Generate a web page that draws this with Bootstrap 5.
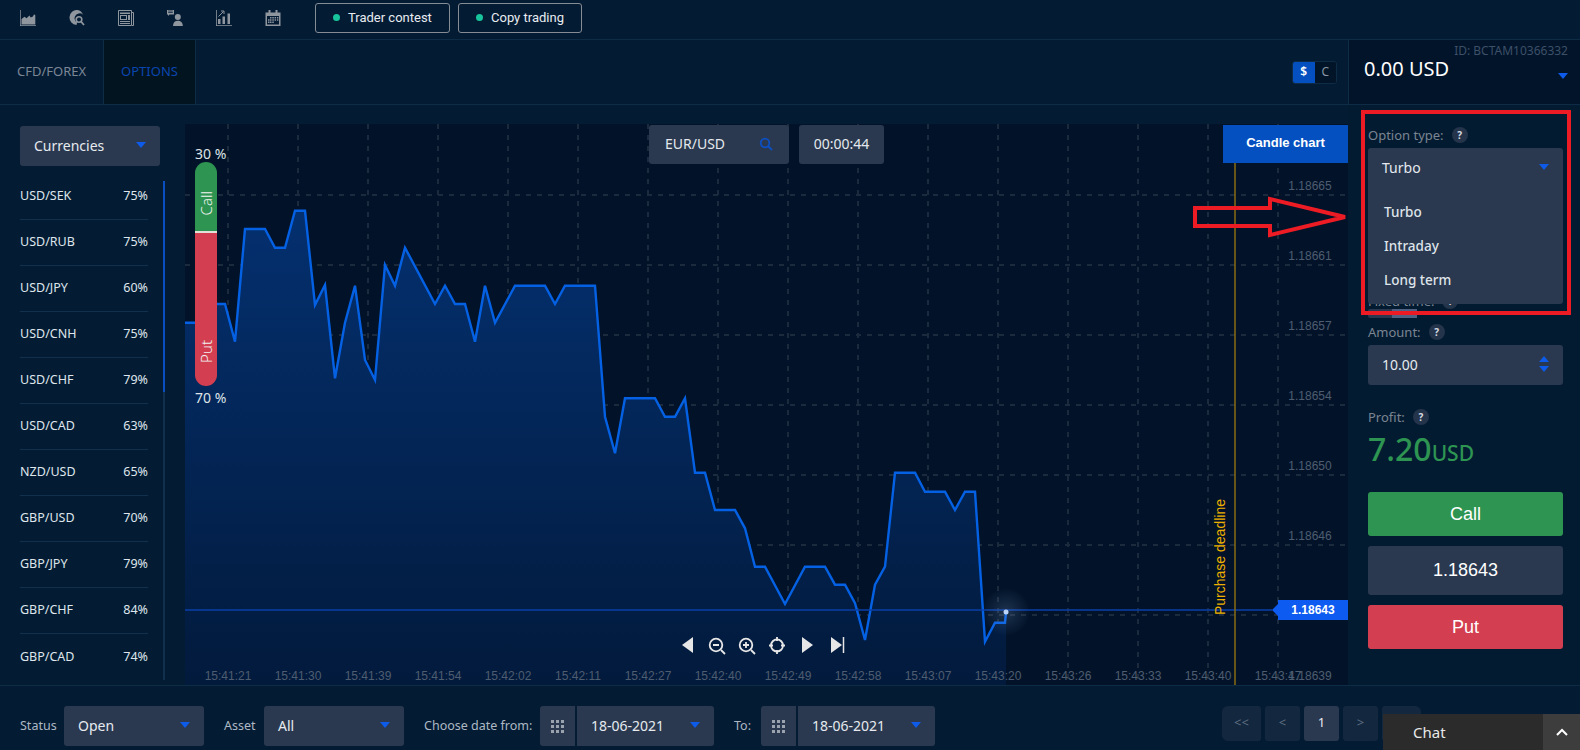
<!doctype html>
<html lang="en">
<head>
  <meta charset="utf-8">
  <meta name="viewport" content="width=device-width, initial-scale=1">
  <title>Options trading</title>
  <link href="https://cdn.jsdelivr.net/npm/bootstrap@5.3.3/dist/css/bootstrap.min.css" rel="stylesheet">
  <style>
    html, body { height: 100%; }
    body {
      width: 1580px; height: 750px; overflow: hidden; position: relative;
      background: #031c33; color: #e4e8ee;
      font-family: "Noto Sans", sans-serif; font-size: 13px;
    }
    /* top bars */
    .tool-bar { height: 40px; padding: 0 0 4px 20px; border-bottom: 1px solid #0f2c47; background: #041b34; }
    .tool-icon { width: 16px; height: 16px; margin-right: 33px; flex: none; }
    .tool-icon:nth-child(6) { margin-right: 34px; }
    .promo-btn {
      height: 30px; padding: 0 17px; font: 13px Roboto, sans-serif; color: #e8ecf0; background: transparent;
      border: 1px solid #868c94; border-radius: 3px; white-space: nowrap;
    }
    .promo-btn:first-child { width: 135px; }
    .promo-btn:last-child { width: 124px; }
    .dot { width: 7px; height: 7px; border-radius: 50%; background: #17c49b; }
    .market-bar { height: 65px; border-bottom: 1px solid #0f2c47; background: #041b34; }
    .market-tab { height: 64px; font-size: 13px; color: #7b8794; border-right: 1px solid #0f2c47; width: 104px; }
    .market-tab.active-tab { width: 92px; background: #02141f; color: #0b46b0; }
    .cur-toggle { height: 23px; width: 45px; border: 1px solid #0f2c47; border-radius: 3px; overflow: hidden; margin-right: 11px; font-size: 12px; }
    .cur-toggle span { flex: 1; }
    .cur-on { background: #0450c0; color: #fff; font-weight: 600; }
    .cur-off { background: #021427; color: #8a95a3; }
    .balance { width: 232px; height: 64px; background: #01142a; border-left: 1px solid #0f2c47; position: relative; padding: 13px 12px 0 15px; }
    .acc-id { font-size: 12px; color: #3d5068; text-align: right; line-height: 12px; margin-top: -8px; margin-bottom: -1px; }
    .acc-sum { font-size: 20px; line-height: 26px; color: #fff; }
    .acc-caret { position: absolute; right: 12px; top: 33px; }
    /* main */
    .main-row { height: 580px; }
    .side-col { width: 185px; padding: 21px 0 0 20px; flex: none; position: relative; }
    .dark-select {
      background: #2a394f; border-radius: 3px; height: 40px; padding: 0 14px 2px; color: #e6eaf0; font-size: 14px;
    }
    .sel-w { width: 140px; }
    .tri-down { width: 0; height: 0; border: 5px solid transparent; border-top: 6px solid #0d5be8; border-bottom: 0; flex: none; }
    .tri-up { width: 0; height: 0; border: 5px solid transparent; border-bottom: 6px solid #0d5be8; border-top: 0; }
    .pair-list { width: 128px; margin-top: 8px; --bs-list-group-bg: transparent; --bs-list-group-color: #dfe5ec; --bs-list-group-border-color: #12304c; }
    .pair-list .list-group-item { height: 46px; padding: 0; font-size: 12.5px; }
    .scroll-track { position: absolute; left: 163px; top: 76px; width: 2px; height: 499px; background: #12304c; }
    .scroll-thumb { height: 211px; background: #0a4fc0; }
    .chart-col { width: 1163px; flex: none; margin-top: 19px; height: 561px; position: relative; }
    .chart-col svg { display: block; }
    .axis-text { font: 12px "Liberation Sans", sans-serif; fill: #4f5d70; }
    .deadline-text { font-size: 14px; fill: #eeb000; }
    .candle-btn {
      position: absolute; right: 0; top: 1px; width: 125px; height: 38px; padding: 0 0 4px; background: #0450c0; color: #fff;
      font: bold 13px "Liberation Sans", sans-serif; border: 0; border-radius: 0;
    }
    .pair-box { position: absolute; top: 1px; left: 464px; display: flex; gap: 10px; }
    .pair-box > div { height: 39px; background: #2a394f; border-radius: 3px; font-size: 14px; padding-bottom: 2px; }
    .pair-name { width: 140px; padding: 0 16px; }
    .pair-timer { width: 85px; }
    .gauge { position: absolute; left: 10px; top: 38px; width: 22px; height: 224px; border-radius: 11px; overflow: hidden; }
    .gauge-call { height: 71px; background: #2d9551; border-bottom: 2px solid #e4e0d8; padding-top: 29px; }
    .gauge-put { height: 153px; background: #d33f50; padding-bottom: 23px; }
    .v-text { writing-mode: vertical-rl; transform: rotate(180deg); font-size: 15px; font-weight: 300; line-height: 22px; color: #f2f2f2; }
    .gauge-pct { position: absolute; left: 10px; font-size: 14px; line-height: 16px; color: #dfe3e8; }
    .pct-top { top: 22px; }
    .pct-bottom { top: 266px; }
    .price-tag {
      position: absolute; left: 1093px; top: 476px; width: 70px; height: 20px; background: #0d5bf0; color: #fff;
      font: bold 12px "Liberation Sans", sans-serif;
    }
    .price-tag::before {
      content: ""; position: absolute; left: -6px; top: 4px; border: 6px solid transparent; border-left: 0; border-right-color: #0d5bf0;
    }
    .panel-col { width: 232px; padding: 20px 17px 0 20px; flex: none; background: #031b31; }
    .field-label { height: 20px; color: #7b8591; font-size: 13px; line-height: 20px; }
    .hint { width: 16px; height: 16px; border-radius: 50%; background: #24344a; color: #d6dbe2; font-size: 10px; font-weight: 700; margin-left: 8px; }
    .type-wrap { position: relative; margin: 3px 0 103px; }
    .type-head { border-radius: 3px 3px 0 0; }
    .type-menu { position: absolute; left: 0; right: 0; top: 40px; height: 116px; background: #2a394f; border-radius: 0 0 3px 3px; padding: 7px 16px 0; z-index: 2; font-weight: 500; font-size: 13.5px; color: #dfe4ea; }
    .type-menu div { height: 34px; line-height: 34px; }
    .toggle-track { width: 49px; height: 9px; background: #2a394f; border-radius: 2px; margin-top: -2px; margin-bottom: 1px; }
    .toggle-track div { width: 25px; height: 9px; margin-left: 24px; background: #4f6284; }
    .amount-label { margin-top: 4px; }
    .amount-box { margin: 3px 0 22px; }
    .spin { gap: 4px; }
    .profit-num { color: #2d9551; font-size: 32px; font-weight: 500; line-height: 40px; height: 40px; margin: 2px 0 23px; }
    .profit-num small { font-size: 21px; }
    .act-btn { height: 44px; width: 195px; border: 0; border-radius: 3px; color: #fff; font: 18px "Liberation Sans", sans-serif; }
    .act-call { background: #2d9551; }
    .act-put { background: #d33f50; }
    .act-price { height: 49px; width: 195px; background: #2a394f; border-radius: 3px; font: 18px "Liberation Sans", sans-serif; color: #fff; margin: 10px 0; }
    /* bottom */
    .bottom-bar { height: 65px; border-top: 1px solid #0f2c47; padding: 20px 0 0 20px; position: relative; }
    .flt-label { color: #aeb8c4; font-size: 12.5px; height: 40px; white-space: nowrap; }
    .lbl-status, .lbl-asset { width: 44px; }
    .lbl-from { width: 110px; }
    .lbl-to { width: 21px; }
    .date-grid { width: 35px; height: 40px; background: #2a394f; border-radius: 3px 0 0 3px; margin: 0 2px 0 10px; }
    .dots-icon { width: 13px; height: 13px; }
    .date-sel { border-radius: 0 3px 3px 0; width: 137px; }
    .pager { position: absolute; left: 1222px; top: 20px; gap: 5px; --bs-pagination-bg: #13273f; --bs-pagination-border-width: 0; --bs-pagination-color: #5f6f82; }
    .pager .page-link { height: 35px; width: 35px; padding: 0; line-height: 33px; font-size: 13px; border-radius: 3px; text-align: center; background: #13273f; color: #5f6f82; }
    .pager .page-item:first-child .page-link, .pager .page-item:last-child .page-link { width: 39px; }
    .pager .page-item.active .page-link { background: #2a394f; color: #e6eaf0; }
    .chat-box { position: absolute; right: 0; bottom: 0; width: 197px; height: 36px; background: #2b2b2b; color: #e8e8e8; font-size: 15px; z-index: 3; }
    .chat-name { padding-left: 30px; }
    .chat-up { width: 37px; height: 36px; background: #3d3d3d; }
    /* annotation drawn on the screenshot */
    .red-frame { position: absolute; left: 1361px; top: 110px; width: 210px; height: 205px; border: 4px solid #ed1c24; z-index: 5; pointer-events: none; }
    .red-arrow { position: absolute; left: 1190px; top: 192px; z-index: 5; pointer-events: none; }
  </style>
</head>
<body>
  <!-- tools -->
  <div class="tool-bar d-flex align-items-center">
    <svg class="tool-icon" viewBox="0 0 16 16"><path d="M0 0v16h16v-.8H.7V0z" fill="#8f969e"/><path d="M1.500 14.500V9l3-2.300 2 1.600 3-2.700 1.200 2 2.200-1 1.200-2.400 1.200 1v9.300z" fill="#8f969e"/></svg>
    <svg class="tool-icon" viewBox="0 0 16 16"><path d="M8.500 0A7.500 7.500 0 0 0 7.500 15l.6-2.400A5.200 5.200 0 0 1 6.200 6 5 5 0 0 1 14 4.700 7.500 7.500 0 0 0 8.500 0z" fill="#8f969e"/><circle cx="10" cy="9.500" r="2.800" fill="none" stroke="#8f969e" stroke-width="1.600"/><path d="M12 11.500l3 3.500" stroke="#8f969e" stroke-width="1.800"/></svg>
    <svg class="tool-icon" viewBox="0 0 16 16"><path d="M.5.500h13v15H.5zM14 2.500h1.500v13H14" fill="none" stroke="#8f969e"/><path d="M2 2.500h10V4H2zM2 5h7v5H2zM10 5h2v5h-2zM2 11h10v1H2zM2 13h10v1H2z" fill="#8f969e"/><path d="M3 6h5v3H3z" fill="#041b34"/></svg>
    <svg class="tool-icon" viewBox="0 0 16 16"><path d="M0 0h7v4.500H2.500L1 6V4.500H0z" fill="#8f969e"/><path d="M1.200 1h4.600M1.200 2.500h4.600" stroke="#041b34" stroke-width=".7"/><circle cx="10.800" cy="7" r="3" fill="#8f969e"/><path d="M6 16c0-3.500 2-5.300 4.800-5.300S15.800 12.500 15.800 16z" fill="#8f969e"/></svg>
    <svg class="tool-icon" viewBox="0 0 16 16"><path d="M0 0v16h16v-.8H.8V0z" fill="#8f969e"/><path d="M2 9h2.500v5H2zM6.500 6.500H9V14H6.500zM11.500 3.500H14V14h-2.500z" fill="#8f969e"/><path d="M2.500 6.500l5-5M5 1h3v3" fill="none" stroke="#8f969e" stroke-width="1"/></svg>
    <svg class="tool-icon" viewBox="0 0 16 16"><path d="M.5 2.500h15V16H.5z" fill="#8f969e"/><path d="M2 6h12v8.500H2z" fill="#041b34"/><path d="M3.500 0h2v4h-2zM10.500 0h2v4h-2z" fill="#8f969e"/><path d="M5 7h1.500v1.500H5zM7.300 7h1.500v1.500H7.300zM9.600 7h1.500v1.500H9.600zM12 7h1.300v1.500H12zM3 9.300h1.500v1.500H3zM5 9.300h1.500v1.500H5zM7.300 9.300h1.500v1.500H7.300zM9.600 9.300h1.500v1.500H9.600zM12 9.300h1.300v1.500H12zM3 11.600h1.500v1.500H3zM5 11.600h1.500v1.500H5zM7.300 11.600h1.500v1.500H7.300z" fill="#8f969e"/></svg>
    <div class="d-flex gap-2">
      <button class="promo-btn d-flex align-items-center gap-2"><span class="dot"></span>Trader contest</button>
      <button class="promo-btn d-flex align-items-center gap-2"><span class="dot"></span>Copy trading</button>
    </div>
  </div>

  <!-- market tabs + balance -->
  <div class="market-bar d-flex align-items-center">
    <div class="market-tab d-flex align-items-center justify-content-center">CFD/FOREX</div>
    <div class="market-tab active-tab d-flex align-items-center justify-content-center">OPTIONS</div>
    <div class="cur-toggle d-flex ms-auto text-center">
      <span class="cur-on d-flex align-items-center justify-content-center">$</span>
      <span class="cur-off d-flex align-items-center justify-content-center">C</span>
    </div>
    <div class="balance">
      <div class="acc-id">ID: BCTAM10366332</div>
      <div class="acc-sum">0.00 USD</div>
      <span class="tri-down d-block acc-caret"></span>
    </div>
  </div>

  <div class="main-row d-flex">
    <!-- asset list -->
    <div class="side-col">
      <div class="dark-select sel-w d-flex align-items-center justify-content-between">Currencies <span class="tri-down"></span></div>
      <ul class="list-group list-group-flush pair-list" id="pairs"></ul>
      <div class="scroll-track"><div class="scroll-thumb"></div></div>
    </div>

    <!-- chart -->
    <div class="chart-col">
      <svg id="chart" width="1163" height="561" viewBox="185 124 1163 561">
        <defs>
          <linearGradient id="areaFill" x1="0" y1="0" x2="0" y2="1">
            <stop offset="0" stop-color="#04306f"/>
            <stop offset="1" stop-color="#021a3c"/>
          </linearGradient>
          <radialGradient id="glow">
            <stop offset="0" stop-color="#8fb4e8" stop-opacity=".2"/>
            <stop offset="1" stop-color="#8fb4e8" stop-opacity="0"/>
          </radialGradient>
        </defs>
        <rect x="185" y="124" width="1163" height="561" fill="#021329"/>
        <g id="grid" stroke="#1b2a3d" stroke-width="2" stroke-dasharray="5 6"></g>
        <polygon id="area" fill="url(#areaFill)"></polygon>
        <polyline id="line" fill="none" stroke="#0561e4" stroke-width="2.400"></polyline>
        <line x1="185" x2="1272" y1="610" y2="610" stroke="#0a3fa8" stroke-width="1.500"/>
        <line x1="1235" x2="1235" y1="163" y2="685" stroke="#8a6d12" stroke-width="1.500"/>
        <text class="axis-text deadline-text" transform="translate(1225 615) rotate(-90)">Purchase deadline</text>
        <circle cx="1006" cy="612" r="24" fill="url(#glow)"/>
        <circle cx="1006" cy="612" r="2.500" fill="#bcd4f7"/>
        <g id="labels"></g>
        <g fill="#e6e6e6" stroke="#e6e6e6">
          <path d="M693 637v16l-11-8z" stroke="none"/>
          <circle cx="716" cy="645" r="6.300" fill="none" stroke-width="1.800"/><path d="M713 645h6M721 650l4 4" stroke-width="1.800"/>
          <circle cx="746" cy="645" r="6.300" fill="none" stroke-width="1.800"/><path d="M743 645h6M746 642v6M751 650l4 4" stroke-width="1.800"/>
          <circle cx="777" cy="645.500" r="6" fill="none" stroke-width="1.800"/><path d="M777 637v4M777 650v4M769 645.500h4M781 645.500h4" stroke-width="1.800"/>
          <path d="M802 637v16l11-8z" stroke="none"/>
          <path d="M831 637v16l11-8z" stroke="none"/><path d="M843.500 637v16" stroke-width="1.500"/>
        </g>
      </svg>

      <div class="pair-box">
        <div class="pair-name d-flex align-items-center justify-content-between">EUR/USD
          <svg width="14" height="14" viewBox="0 0 14 14"><circle cx="6" cy="6" r="4.300" fill="none" stroke="#0d4fc0" stroke-width="1.800"/><path d="M9 9l4 4" stroke="#0d4fc0" stroke-width="2"/></svg>
        </div>
        <div class="pair-timer d-flex align-items-center justify-content-center">00:00:44</div>
      </div>
      <button class="btn candle-btn">Candle chart</button>
      <div class="gauge-pct pct-top">30 %</div>
      <div class="gauge d-flex flex-column">
        <div class="gauge-call d-flex justify-content-center align-items-start"><span class="v-text">Call</span></div>
        <div class="gauge-put d-flex justify-content-center align-items-end"><span class="v-text">Put</span></div>
      </div>
      <div class="gauge-pct pct-bottom">70 %</div>
      <div class="price-tag d-flex align-items-center justify-content-center">1.18643</div>
    </div>

    <!-- order panel -->
    <div class="panel-col">
      <div class="field-label d-flex align-items-center">Option type: <span class="hint d-flex align-items-center justify-content-center">?</span></div>
      <div class="type-wrap">
        <div class="dark-select type-head d-flex align-items-center justify-content-between">Turbo <span class="tri-down"></span></div>
        <div class="type-menu"><div>Turbo</div><div>Intraday</div><div>Long term</div></div>
      </div>
      <div class="field-label d-flex align-items-center">Fixed time: <span class="hint d-flex align-items-center justify-content-center">?</span></div>
      <div class="toggle-track"><div></div></div>
      <div class="field-label amount-label d-flex align-items-center">Amount: <span class="hint d-flex align-items-center justify-content-center">?</span></div>
      <div class="dark-select amount-box d-flex align-items-center justify-content-between">10.00
        <span class="d-flex flex-column spin"><span class="tri-up"></span><span class="tri-down"></span></span>
      </div>
      <div class="field-label d-flex align-items-center">Profit: <span class="hint d-flex align-items-center justify-content-center">?</span></div>
      <div class="profit-num">7.20<small>USD</small></div>
      <button class="btn act-btn act-call d-block">Call</button>
      <div class="act-price d-flex align-items-center justify-content-center">1.18643</div>
      <button class="btn act-btn act-put d-block">Put</button>
    </div>
  </div>

  <!-- filters -->
  <div class="bottom-bar d-flex align-items-start">
    <label class="flt-label lbl-status d-flex align-items-center">Status</label>
    <div class="dark-select sel-w d-flex align-items-center justify-content-between">Open <span class="tri-down"></span></div>
    <label class="flt-label lbl-asset d-flex align-items-center ms-3 ps-1">Asset</label>
    <div class="dark-select sel-w d-flex align-items-center justify-content-between">All <span class="tri-down"></span></div>
    <label class="flt-label lbl-from d-flex align-items-center ms-3 ps-1">Choose date from:</label>
    <div class="date-grid d-flex align-items-center justify-content-center">
      <svg class="dots-icon" viewBox="0 0 13 13" fill="#9aa3ad"><path d="M0 0h3v3H0zM5 0h3v3H5zM10 0h3v3h-3zM0 5h3v3H0zM5 5h3v3H5zM10 5h3v3h-3zM0 10h3v3H0zM5 10h3v3H5zM10 10h3v3h-3z"/></svg>
    </div>
    <div class="dark-select date-sel d-flex align-items-center justify-content-between">18-06-2021 <span class="tri-down"></span></div>
    <label class="flt-label lbl-to d-flex align-items-center ms-3 ps-1">To:</label>
    <div class="date-grid d-flex align-items-center justify-content-center">
      <svg class="dots-icon" viewBox="0 0 13 13" fill="#9aa3ad"><path d="M0 0h3v3H0zM5 0h3v3H5zM10 0h3v3h-3zM0 5h3v3H0zM5 5h3v3H5zM10 5h3v3h-3zM0 10h3v3H0zM5 10h3v3H5zM10 10h3v3h-3z"/></svg>
    </div>
    <div class="dark-select date-sel d-flex align-items-center justify-content-between">18-06-2021 <span class="tri-down"></span></div>
    <ul class="pagination pager mb-0">
      <li class="page-item"><a class="page-link" href="#">&lt;&lt;</a></li>
      <li class="page-item"><a class="page-link" href="#">&lt;</a></li>
      <li class="page-item active"><a class="page-link" href="#">1</a></li>
      <li class="page-item"><a class="page-link" href="#">&gt;</a></li>
      <li class="page-item"><a class="page-link" href="#">&gt;&gt;</a></li>
    </ul>
    <div class="chat-box d-flex align-items-center">
      <span class="flex-grow-1 chat-name">Chat</span>
      <span class="chat-up d-flex align-items-center justify-content-center">
        <svg width="12" height="8" viewBox="0 0 12 8"><path d="M1 7l5-5 5 5" fill="none" stroke="#fff" stroke-width="2"/></svg>
      </span>
    </div>
  </div>

  <div class="red-frame"></div>
  <svg class="red-arrow" width="160" height="48" viewBox="1190 191 160 48">
    <path d="M1195 207h75v-9l75 18-75 18v-9h-75z" fill="none" stroke="#ed1c24" stroke-width="4"/>
  </svg>

  <script>
    const pairs = [["USD/SEK", 75], ["USD/RUB", 75], ["USD/JPY", 60], ["USD/CNH", 75], ["USD/CHF", 79], ["USD/CAD", 63],
      ["NZD/USD", 65], ["GBP/USD", 70], ["GBP/JPY", 79], ["GBP/CHF", 84], ["GBP/CAD", 74]];
    document.getElementById("pairs").innerHTML = pairs.map(p =>
      `<li class="list-group-item d-flex align-items-center justify-content-between"><span>${p[0]}</span><span>${p[1]}%</span></li>`).join("");

    const pts = "185,322.7 205,322.7 215,304 225,304 235,341.7 245,229 265,229 275,247.7 285,247.7 295,210.7 305,210.7 315,305 325,285 335,378.3 345,322.7 355,285.7 365,360 375,380 385,265 395,285.7 405,247.7 435,304 445,285.7 455,304 465,304 475,341.7 485,285.7 495,322.7 515,285.7 545,285.7 555,304 565,285.7 595,285.7 605,416.7 615,453.3 625,398.3 655,398.3 665,416.7 675,416.7 685,398.3 695,472.7 705,472.7 715,510 735,510 745,528.3 755,566.7 765,566.7 785,604 805,566.7 825,566.7 835,584.7 845,584.7 855,603.3 865,640 875,584.7 885,566.7 895,472.7 915,472.7 925,491.7 945,491.7 955,510 965,491.7 975,491.7 985,641.7 995,622.7 1005,622.7 1006,612.3";
    document.getElementById("line").setAttribute("points", pts);
    document.getElementById("area").setAttribute("points", pts + " 1006,685 185,685");

    let grid = "";
    for (let x = 228; x < 1348; x += 70) grid += `<line x1="${x}" x2="${x}" y1="124" y2="685"/>`;
    for (let y = 195; y < 680; y += 70) grid += `<line x1="185" x2="1348" y1="${y}" y2="${y}"/>`;
    document.getElementById("grid").innerHTML = grid;

    const times = ["15:41:21", "15:41:30", "15:41:39", "15:41:54", "15:42:02", "15:42:11", "15:42:27", "15:42:40", "15:42:49", "15:42:58", "15:43:07", "15:43:20", "15:43:26", "15:43:33", "15:43:40", "15:43:47"];
    let labels = times.map((t, i) => `<text class="axis-text" text-anchor="middle" x="${228 + 70 * i}" y="680">${t}</text>`).join("");
    ["1.18665", "1.18661", "1.18657", "1.18654", "1.18650", "1.18646"].forEach((p, i) => {
      labels += `<text class="axis-text" text-anchor="middle" x="1310" y="${190 + 70 * i}">${p}</text>`;
    });
    labels += `<text class="axis-text" text-anchor="middle" x="1310" y="680">1.18639</text>`;
    document.getElementById("labels").innerHTML = labels;
  </script>
  <script src="https://cdn.jsdelivr.net/npm/bootstrap@5.3.3/dist/js/bootstrap.bundle.min.js"></script>
</body>
</html>
